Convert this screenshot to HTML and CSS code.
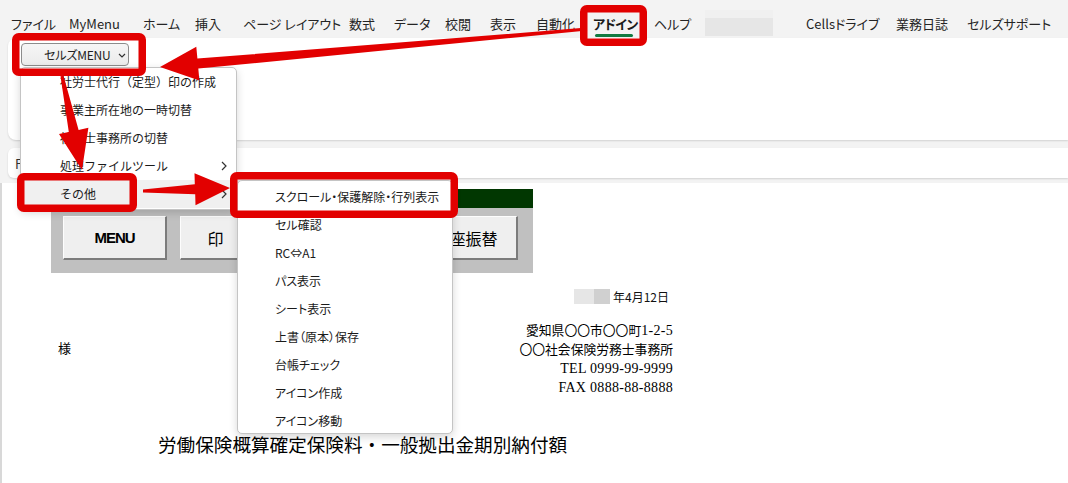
FILE: index.html
```html
<!DOCTYPE html>
<html lang="ja">
<head>
<meta charset="utf-8">
<title>セルズMENU</title>
<link rel="stylesheet" href="styles.css">
</head>
<body>
<div class="app">
  <nav class="tabs">
    <span class="tab">ファイル</span>
    <span class="tab">MyMenu</span>
    <span class="tab">ホーム</span>
    <span class="tab">挿入</span>
    <span class="tab">ページ レイアウト</span>
    <span class="tab">数式</span>
    <span class="tab">データ</span>
    <span class="tab">校閲</span>
    <span class="tab">表示</span>
    <span class="tab">自動化</span>
    <span class="tab active">アドイン</span>
    <span class="tab">ヘルプ</span>
    <span class="tab"><span class="blur-tab"></span></span>
    <span class="tab">Cellsドライブ</span>
    <span class="tab">業務日誌</span>
    <span class="tab">セルズサポート</span>
  </nav>

  <section class="ribbon">
    <button class="menu-btn"><span class="menu-btn-label">セルズMENU</span><svg class="chev-down" width="8" height="5" viewBox="0 0 8 5"><path d="M1 1 L4 4 L7 1" fill="none" stroke="#333" stroke-width="1.2"/></svg></button>
  </section>

  <div class="formula"><span class="namebox">F3</span></div>

  <main class="sheet">
    <div class="panel">
      <div class="panel-bar"></div>
      <div class="panel-body">
        <div class="sbtn menu">MENU</div>
        <div class="sbtn">印　刷</div>
        <div class="sbtn">様式選択</div>
        <div class="sbtn">口座振替</div>
      </div>
    </div>
    <div class="doc">
      <div class="date-row"><span class="blur-date"><i class="b1"></i><i class="b2"></i></span>年4月12日</div>
      <div class="addr-row">
        <div class="honor">様</div>
        <div class="addr">
          <div><span class="cj">愛知県〇〇市〇〇町</span><span class="an">1-2-5</span></div>
          <div><span class="cj">〇〇社会保険労務士事務所</span></div>
          <div><span class="an">TEL 0999-99-9999</span></div>
          <div><span class="an">FAX 0888-88-8888</span></div>
        </div>
      </div>
      <h1 class="title">労働保険概算確定保険料・一般拠出金期別納付額</h1>
    </div>
  </main>

  <ul class="dropdown">
    <li class="item">社労士代行（定型）印の作成</li>
    <li class="item">事業主所在地の一時切替</li>
    <li class="item">社労士事務所の切替</li>
    <li class="item has-sub">処理ファイルツール<svg class="chev-right" width="6" height="10" viewBox="0 0 6 10"><path d="M1 1 L5 5 L1 9" fill="none" stroke="#333" stroke-width="1.2"/></svg></li>
    <li class="item has-sub hover">その他<svg class="chev-right" width="6" height="10" viewBox="0 0 6 10"><path d="M1 1 L5 5 L1 9" fill="none" stroke="#333" stroke-width="1.2"/></svg></li>
  </ul>

  <ul class="submenu">
    <li class="item">スクロール・保護解除・行列表示</li>
    <li class="item">セル確認</li>
    <li class="item">RC⇔A1</li>
    <li class="item">パス表示</li>
    <li class="item">シート表示</li>
    <li class="item">上書（原本）保存</li>
    <li class="item">台帳チェック</li>
    <li class="item">アイコン作成</li>
    <li class="item">アイコン移動</li>
  </ul>

  <svg class="annot" width="1068" height="483" viewBox="0 0 1068 483">
    <g fill="#e20000">
      <polygon points="586.9,27.6 197.4,58.6 196.3,46.7 160,67 199.4,80.6 198.3,68.6 587.1,30.4"/>
      <polygon points="60.5,76.3 63.5,75.7 78.6,129.9 88.4,127.8 82,170 59.0,134.0 68.8,131.9"/>
      <polygon points="143,189.5 194.8,184.2 194.5,173.2 230,188 195.5,205.2 195.2,194.2 143,192.5"/>
    </g>
    <g fill="none" stroke="#e20000" stroke-width="7.5" stroke-linejoin="round">
      <rect x="15.75" y="36.75" width="126.5" height="35.5" rx="3"/>
      <rect x="583.75" y="8.75" width="59.5" height="33.5" rx="3"/>
      <rect x="20.75" y="176.75" width="112.5" height="31.5" rx="3"/>
      <rect x="233.75" y="175.75" width="220.5" height="38.5" rx="3"/>
    </g>
  </svg>
</div>
</body>
</html>
```

FILE: styles.css
```css
* { box-sizing: border-box; }

html, body {
  margin: 0;
  padding: 0;
}

body {
  width: 1068px;
  height: 483px;
  overflow: hidden;
  background: #f3f3f3;
  font-family: "Noto Sans CJK JP", "Noto Sans", sans-serif;
  color: #1f1f1f;
}

.app {
  position: relative;
  width: 1068px;
  height: 483px;
  display: flex;
  flex-direction: column;
}

/* ---------- tabs ---------- */
.tabs {
  height: 38px;
  flex: none;
  display: grid;
  grid-template-columns: 58px 74px 52px 48px 106px 45px 51px 45px 46px 57px 61px 51px 101px 90px 71px 1fr;
  align-items: end;
  padding-left: 11px;
  font-size: 13px;
  font-feature-settings: "palt" 1;
  color: #242424;
}

.tab {
  position: relative;
  line-height: 18px;
  padding-bottom: 5px;
  white-space: nowrap;
}

.tab.active {
  font-weight: 700;
  letter-spacing: -0.6px;
  color: #1b1b1b;
}

.tab.active::after {
  content: "";
  position: absolute;
  left: 2px;
  width: 38px;
  bottom: 1px;
  height: 3px;
  border-radius: 2px;
  background: #117a41;
}

.blur-tab {
  display: block;
  width: 68px;
  height: 26px;
  margin-bottom: -3px;
  background: linear-gradient(180deg, #f0f0f0 0, #f0f0f0 30%, #e6e6e6 30%, #e6e6e6 100%);
}

/* ---------- ribbon ---------- */
.ribbon {
  flex: none;
  height: 102px;
  margin-left: 8px;
  background: #fff;
  border-radius: 8px 0 0 8px;
  box-shadow: 0 1px 2px rgba(0, 0, 0, 0.14);
  padding: 5px 0 0 13px;
}

.menu-btn {
  display: flex;
  align-items: center;
  width: 108px;
  height: 23px;
  padding: 0 0 0 22px;
  border: 1px solid #8c8c8c;
  border-radius: 4px;
  background: linear-gradient(180deg, #f6f6f6, #ebebeb);
  font-family: "Noto Sans CJK JP", "Noto Sans", sans-serif;
  font-feature-settings: "palt" 1;
  font-size: 12px;
  color: #222;
  line-height: 1;
  white-space: nowrap;
}

.menu-btn-label {
  letter-spacing: -0.2px;
}

.chev-down {
  margin-left: 7px;
  margin-top: 2px;
  flex: none;
}

/* ---------- formula bar ---------- */
.formula {
  flex: none;
  height: 30px;
  margin: 8px 0 0 8px;
  background: #fff;
  border-radius: 6px 0 0 6px;
  box-shadow: 0 1px 2px rgba(0, 0, 0, 0.14);
  padding-left: 7px;
  display: flex;
  align-items: center;
  font-size: 13px;
  color: #333;
}

/* ---------- sheet ---------- */
.sheet {
  flex: 1;
  margin-top: 5px;
  background: #fff;
  border-left: 2px solid #d8d8d8;
  padding: 6px 0 0 49px;
}

.panel {
  width: 482px;
}

.panel-bar {
  height: 19px;
  background: #013701;
}

.panel-body {
  height: 65px;
  background: #c0c0c0;
  display: flex;
  gap: 13px;
  padding: 8px 0 0 12px;
}

.sbtn {
  flex: none;
  width: 104px;
  height: 44px;
  background: #efefef;
  border-top: 1px solid #fdfdfd;
  border-left: 1px solid #fdfdfd;
  border-right: 2px solid #7c7c7c;
  border-bottom: 2px solid #7c7c7c;
  display: flex;
  align-items: center;
  justify-content: center;
  font-size: 16px;
  color: #000;
  white-space: nowrap;
}

.sbtn.menu {
  font-family: "Liberation Sans", sans-serif;
  font-weight: 700;
  font-size: 15px;
  letter-spacing: -1px;
}

.doc {
  width: 622px;
}

.date-row {
  display: flex;
  justify-content: flex-end;
  align-items: center;
  margin-top: 15px;
  padding-right: 4px;
  height: 16px;
  font-size: 12px;
  color: #111;
}

.blur-date {
  display: flex;
  height: 15px;
  margin-right: 3px;
}

.blur-date .b1 {
  width: 20px;
  background: #e6e6e6;
}

.blur-date .b2 {
  width: 16px;
  background: #d0d0d0;
}

.addr-row {
  display: flex;
  justify-content: space-between;
  align-items: flex-start;
  margin-top: 17px;
  font-size: 13px;
  line-height: 18.3px;
  color: #000;
}

.honor {
  padding: 18.3px 0 0 7px;
}

.addr {
  text-align: right;
  white-space: nowrap;
}

.addr .cj {
  font-family: "Noto Sans CJK JP", sans-serif;
  font-size: 12.8px;
}

.addr .an {
  font-family: "Liberation Serif", serif;
  font-size: 14px;
  letter-spacing: 0.3px;
}

.title {
  margin: 35px 0 0 107px;
  font-size: 18.6px;
  font-weight: 400;
  line-height: 24px;
  white-space: nowrap;
  color: #000;
}

/* ---------- menus ---------- */
.dropdown,
.submenu {
  position: absolute;
  margin: 0;
  list-style: none;
  background: #fff;
  border: 1px solid #c4c4c4;
  border-radius: 5px;
  box-shadow: 0 3px 8px rgba(0, 0, 0, 0.16);
  font-size: 12px;
  color: #1a1a1a;
}

.dropdown {
  left: 20px;
  top: 67px;
  width: 217px;
  padding: 0 0 1px;
}

.submenu {
  left: 237px;
  top: 180px;
  width: 216px;
  height: 254px;
  overflow: hidden;
  padding: 2px 0 0;
  font-feature-settings: "palt" 1;
}

.item {
  position: relative;
  height: 28px;
  line-height: 28px;
  white-space: nowrap;
}

.dropdown .item {
  padding-left: 39px;
}

.submenu .item {
  padding-left: 37px;
}

.item.hover {
  background: #f0f0f0;
}

.chev-right {
  position: absolute;
  right: 9px;
  top: 9px;
}

/* ---------- annotations ---------- */
.annot {
  position: absolute;
  left: 0;
  top: 0;
  pointer-events: none;
}
```
